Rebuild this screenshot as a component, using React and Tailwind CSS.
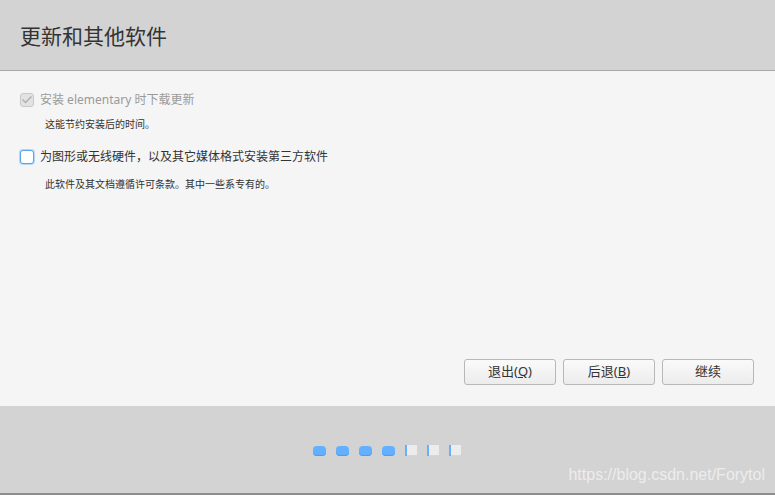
import { Check } from "lucide-react";

const font = { fontFamily: '"Noto Sans", "Noto Sans CJK SC", sans-serif' };

const Dot = () => (
  <span className="block w-[13px] h-[10px] rounded-[4px] bg-[#62b0ff] shadow-[inset_0_-1px_0_#4a9df0]" />
);

const Square = () => (
  <span className="block w-[12px] h-[11px] bg-[#ececec] border-l-2 border-[#62b0ff] shadow-[inset_0_-1px_0_#d6d6d6]" />
);

const Button = ({ children }) => (
  <button className="w-[92px] h-[26px] rounded-[3px] border border-[#b8b8b8] bg-gradient-to-b from-[#fafafa] to-[#ececec] text-[13px] text-[#333]">
    {children}
  </button>
);

export default function App() {
  return (
    <div className="w-[775px] h-[495px] flex flex-col bg-[#f5f5f5]" style={font}>
      <div className="h-[71px] shrink-0 bg-[#d3d3d3] border-b border-[#a9a9a9] flex items-center px-5">
        <h1 className="text-[21px] text-[#333] pt-[4px]">更新和其他软件</h1>
      </div>

      <div className="flex-1 flex flex-col pl-5 pr-[21px] pt-[21px] pb-[21px]">
        <div className="flex items-center gap-[6px] h-[16px]">
          <span className="w-[14px] h-[14px] rounded-[3px] border border-[#c8c8c8] bg-[#e2e2e2] flex items-center justify-center">
            <Check size={12} strokeWidth={3.5} className="text-[#b4b4b4]" />
          </span>
          <span className="text-[12px] text-[#9a9a9a]">安装 elementary 时下载更新</span>
        </div>
        <p className="text-[10px] text-[#333] pl-[25px] mt-[9px]">这能节约安装后的时间。</p>

        <div className="flex items-center gap-[6px] h-[16px] mt-[17px]">
          <span className="w-[14px] h-[14px] rounded-[3px] border border-[#5ba3ea] bg-white shadow-[0_0_0_1px_#b6d7f7]" />
          <span className="text-[12px] text-[#333]">为图形或无线硬件，以及其它媒体格式安装第三方软件</span>
        </div>
        <p className="text-[10px] text-[#333] pl-[25px] mt-[12px]">此软件及其文档遵循许可条款。其中一些系专有的。</p>

        <div className="mt-auto flex justify-end gap-[7px]">
          <Button>
            退出(<span className="underline">Q</span>)
          </Button>
          <Button>
            后退(<span className="underline">B</span>)
          </Button>
          <Button>继续</Button>
        </div>
      </div>

      <div className="h-[89px] shrink-0 bg-[#d3d3d3] border-b-2 border-[#8e8e8e] relative flex justify-center pt-[39px]">
        <div className="flex gap-[10px] items-center h-[11px] ml-[-1px]">
          <Dot />
          <Dot />
          <Dot />
          <Dot />
          <Square />
          <Square />
          <Square />
        </div>
        <span
          className="absolute right-[10px] bottom-[6px] text-[16px] text-white/60"
          style={{ fontFamily: '"Liberation Sans", Arial, sans-serif' }}
        >
          https://blog.csdn.net/Forytol
        </span>
      </div>
    </div>
  );
}
